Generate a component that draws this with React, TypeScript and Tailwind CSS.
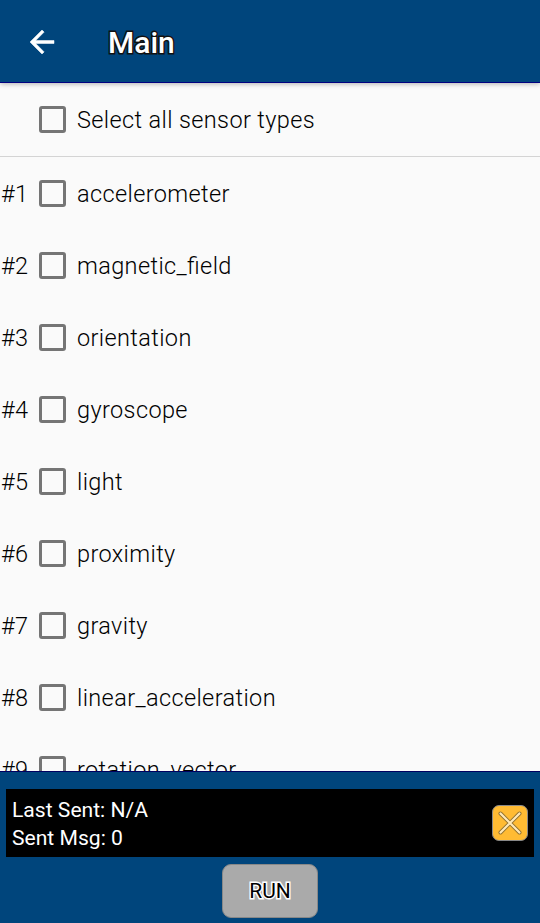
const sensors = [
  'accelerometer',
  'magnetic_field',
  'orientation',
  'gyroscope',
  'light',
  'proximity',
  'gravity',
  'linear_acceleration',
  'rotation_vector',
];

function SensorRow({ index, label }: { index?: string; label: string }) {
  return (
    <label className="flex h-[72px] shrink-0 items-center text-[23.5px] font-[340] leading-none tracking-[0.38px] text-black [font-feature-settings:'liga'_1]">
      <span className="w-[39px] pl-px pt-[4px]">{index}</span>
      <span className="h-[27px] w-[27px] shrink-0 rounded-[3px] border-3 border-[#757575]" />
      <span className="whitespace-nowrap pl-[11px] pt-[4px]">{label}</span>
    </label>
  );
}

export default function App() {
  return (
    <div className="flex h-[923px] w-[540px] flex-col overflow-hidden bg-[#fafafa] font-[Roboto,sans-serif]">
      <header className="z-10 flex h-[83px] shrink-0 items-center border-b border-[#000080] bg-[#00457c] shadow-[0_1px_5px_rgba(0,0,0,0.3)]">
        <svg className="ml-[24px] mt-px h-9 w-9" viewBox="0 0 24 24" fill="#fff" stroke="#fff" strokeWidth="0.35">
          <path d="M20 11H7.83l5.59-5.59L12 4l-8 8 8 8 1.41-1.41L7.83 13H20v-2z" />
        </svg>
        <h1 className="ml-[48px] pt-[3px] text-[30px] font-medium leading-none text-white [-webkit-text-stroke:3px_#111] [paint-order:stroke_fill]">
          Main
        </h1>
      </header>

      <main className="flex min-h-0 flex-1 flex-col overflow-hidden">
        <div className="h-[74px] shrink-0 border-b border-[#d4d4d4]">
          <SensorRow label="Select all sensor types" />
        </div>
        {sensors.map((name, i) => (
          <SensorRow key={name} index={`#${i + 1}`} label={name} />
        ))}
      </main>

      <footer className="flex h-[152px] shrink-0 flex-col items-center border-t border-[#000060] bg-[#00457c] px-[6px] pt-[17px]">
        <div className="flex h-[68px] w-full shrink-0 items-center justify-between bg-black pl-[6px] pr-[6px]">
          <div className="pt-[2px] text-[21.1px] leading-[28.5px] text-white">
            <p>Last Sent: N/A</p>
            <p>Sent Msg: 0</p>
          </div>
          <button className="flex h-9 w-9 items-center justify-center rounded-[7px] border border-[#888888] bg-[#ffbb33]">
            <svg className="h-6 w-6 shrink-0" viewBox="0 0 24 24" strokeLinecap="round">
              <path d="M2.5 2.5l19 19M21.5 2.5l-19 19" stroke="#8f7030" strokeWidth="4" />
              <path d="M2.5 2.5l19 19M21.5 2.5l-19 19" stroke="#ffe9b8" strokeWidth="2.2" />
            </svg>
          </button>
        </div>
        <button className="mt-[7px] h-[54px] w-[96px] shrink-0 rounded-[9px] border border-[#888888] bg-[#aaaaaa] pt-px text-[21px] font-[450] leading-none text-black [-webkit-text-stroke:3px_#fff] [paint-order:stroke_fill]">
          RUN
        </button>
      </footer>
    </div>
  );
}
